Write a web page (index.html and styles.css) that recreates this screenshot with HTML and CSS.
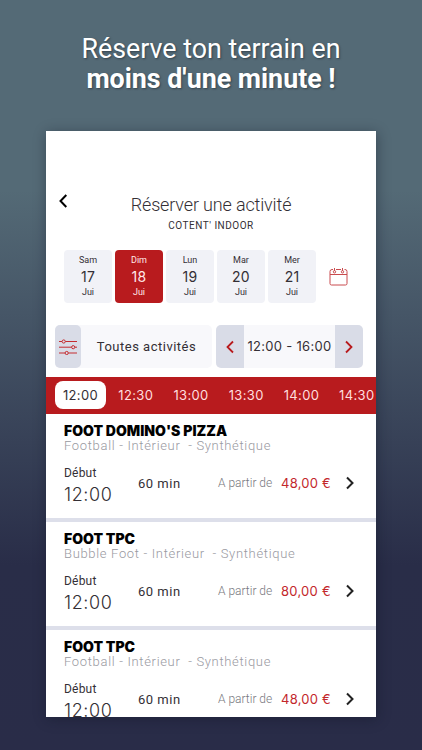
FILE: index.html
```html
<!DOCTYPE html>
<html lang="fr">
<head>
<meta charset="utf-8">
<title>Réserver une activité</title>
<link rel="stylesheet" href="styles.css">
</head>
<body>
<h1 class="headline">Réserve ton terrain en<strong>moins d'une minute !</strong></h1>
<main class="phone">
  <header class="top">
    <svg class="back" viewBox="0 0 12 16"><path d="M9.300 2 3.500 8l5.800 6"/></svg>
    <div class="titles"><div class="title">Réserver une activité</div><div class="club">COTENT' INDOOR</div></div>
  </header>
  <section class="days">
    <div class="day"><span>Sam</span><b>17</b><span>Jui</span></div>
    <div class="day on"><span>Dim</span><b>18</b><span>Jui</span></div>
    <div class="day"><span>Lun</span><b>19</b><span>Jui</span></div>
    <div class="day"><span>Mar</span><b>20</b><span>Jui</span></div>
    <div class="day"><span>Mer</span><b>21</b><span>Jui</span></div>
    <svg class="calendar" viewBox="0 0 20 20"><path d="M4 2.500H3a2 2 0 0 0-2 2V16.500a1.500 1.500 0 0 0 1.500 1.500H16.500a1.500 1.500 0 0 0 1.500-1.500V4.500a2 2 0 0 0-2-2h-.5M7 2.500h5M1 7.500h17M5.500 1v3M13.500 1v3"/><circle cx="5.500" cy="4.800" r="1.200"/><circle cx="13.500" cy="4.800" r="1.200"/></svg>
  </section>
  <section class="filters">
    <div class="activity">
      <div class="sliders"><svg viewBox="0 0 18 16"><path d="M0 2.500h3m3.400 0H18M0 8.200h12.500m3.400 0H18M0 14h6m3.400 0H18"/><circle cx="4.700" cy="2.500" r="1.600"/><circle cx="14.200" cy="8.200" r="1.600"/><circle cx="7.700" cy="14" r="1.600"/></svg></div>
      <span class="all">Toutes activités</span>
    </div>
    <div class="range">
      <div class="step"><svg viewBox="0 0 10 14"><path d="M8 1.500 2.500 7 8 12.500"/></svg></div>
      <span class="hours">12:00 - 16:00</span>
      <div class="step"><svg viewBox="0 0 10 14"><path d="M2 1.500 7.500 7 2 12.500"/></svg></div>
    </div>
  </section>
  <nav class="times"><span class="sel">12:00</span><span>12:30</span><span>13:00</span><span>13:30</span><span>14:00</span><span>14:30</span></nav>
  <article class="slot">
    <h2>FOOT DOMINO'S PIZZA</h2>
    <p class="kind">Football - Intérieur &nbsp;- Synthétique</p>
    <div class="info"><div class="start"><span>Début</span><b>12:00</b></div><span class="length">60 min</span><span class="from">A partir de</span><span class="price">48,00 €</span><svg class="go" viewBox="0 0 10 14"><path d="M2 1.500 7.500 7 2 12.500"/></svg></div>
  </article>
  <article class="slot">
    <h2>FOOT TPC</h2>
    <p class="kind">Bubble Foot - Intérieur &nbsp;- Synthétique</p>
    <div class="info"><div class="start"><span>Début</span><b>12:00</b></div><span class="length">60 min</span><span class="from">A partir de</span><span class="price">80,00 €</span><svg class="go" viewBox="0 0 10 14"><path d="M2 1.500 7.500 7 2 12.500"/></svg></div>
  </article>
  <article class="slot">
    <h2>FOOT TPC</h2>
    <p class="kind">Football - Intérieur &nbsp;- Synthétique</p>
    <div class="info"><div class="start"><span>Début</span><b>12:00</b></div><span class="length">60 min</span><span class="from">A partir de</span><span class="price">48,00 €</span><svg class="go" viewBox="0 0 10 14"><path d="M2 1.500 7.500 7 2 12.500"/></svg></div>
  </article>
</main>
</body>
</html>
```
FILE: styles.css
```css
* { box-sizing: border-box; }
body { margin: 0; width: 422px; height: 750px; overflow: hidden; padding-top: 34px; background: linear-gradient(#546a76 0, #546a76 190px, #292d48 565px, #292c48 100%); font-family: Roboto, "Liberation Sans", sans-serif; color: #342f35; }
h1, h2, p { margin: 0; }
svg { fill: none; stroke: currentColor; flex: none; }
.headline { height: 97px; text-align: center; font-size: 26.800px; line-height: 30px; font-weight: 400; color: #fff; text-shadow: 1px 1px 2px rgba(20, 30, 40, .5); }
.headline strong { display: block; font-weight: 700; }
.phone { width: 330px; height: 586px; margin-left: 46px; background: #fff; overflow: hidden; box-shadow: 1px 2px 12px rgba(15, 20, 35, .4); }
.top { height: 119px; padding: 62px 0 0 11px; display: flex; }
.back { width: 12px; height: 16px; stroke: #000; stroke-width: 2; }
.titles { width: 284px; text-align: center; }
.title { font-size: 18px; line-height: 24px; font-weight: 300; letter-spacing: -.15px; }
.club { font-size: 10px; line-height: 17px; letter-spacing: .5px; }
.days { height: 75px; padding-left: 18px; display: flex; gap: 3px; }
.day { width: 48px; height: 53px; border-radius: 4px; background: #f1f2f7; display: flex; flex-direction: column; align-items: center; padding-top: 4px; }
.day span { font-size: 9px; line-height: 13px; }
.day b { font: 400 14px/19px Inter, sans-serif; letter-spacing: .2px; }
.day.on { background: #b81b1e; color: #ffe9e9; }
.calendar { width: 20px; height: 20px; margin: 17px 0 0 10px; stroke: #c94b4e; stroke-width: 1; }
.filters { height: 52px; padding-left: 9px; display: flex; gap: 4px; }
.activity { width: 157px; height: 43px; display: flex; background: #f8f8fb; border-radius: 5px; }
.sliders { width: 26px; background: #d9dce7; border-radius: 5px; display: flex; align-items: center; justify-content: center; color: #c52c30; }
.sliders svg { width: 18px; height: 16px; }
.all { flex: 1; text-align: center; font-size: 13px; line-height: 43px; letter-spacing: .5px; }
.range { width: 147px; height: 43px; display: flex; background: #f8f8fb; border-radius: 5px; overflow: hidden; }
.step { width: 28px; background: #d9dce7; display: flex; align-items: center; justify-content: center; color: #b81b1e; }
.step svg { width: 10px; height: 14px; stroke-width: 1.800; }
.hours { flex: 1; text-align: center; white-space: nowrap; font: 400 13px/43px Inter, sans-serif; letter-spacing: .3px; }
.times { height: 37px; background: #b81b1e; padding: 4px 0 0 9px; display: flex; gap: 4.250px; color: #ffdede; font: 400 13px/28px Inter, sans-serif; letter-spacing: .35px; overflow: hidden; }
.times span { width: 51px; flex: none; text-align: center; }
.times .sel { height: 28px; background: #fff; color: #342f35; border-radius: 8px; }
.slot { height: 108px; padding: 8px 0 0 18px; border-bottom: 4px solid #dddfea; }
.slot h2 { font: 900 14px/17px Inter, sans-serif; color: #000; }
.kind { font-size: 13px; line-height: 14px; color: #99999f; font-weight: 300; letter-spacing: .67px; white-space: nowrap; }
.info { display: flex; height: 46px; margin-top: 7px; align-items: center; white-space: nowrap; }
.start { width: 74px; margin-top: 2px; }
.start span { display: block; font-size: 12px; line-height: 20px; letter-spacing: .2px; }
.start b { display: block; font: 300 18px/23px Inter, sans-serif; letter-spacing: .6px; }
.length { width: 80px; font-size: 13px; letter-spacing: .5px; }
.from { width: 63px; font-size: 12px; font-weight: 300; color: #77777e; }
.price { width: 64px; font: 400 13px/18px Inter, sans-serif; color: #c3272b; letter-spacing: .25px; }
.go { width: 10px; height: 14px; stroke: #222; stroke-width: 2; }
```
